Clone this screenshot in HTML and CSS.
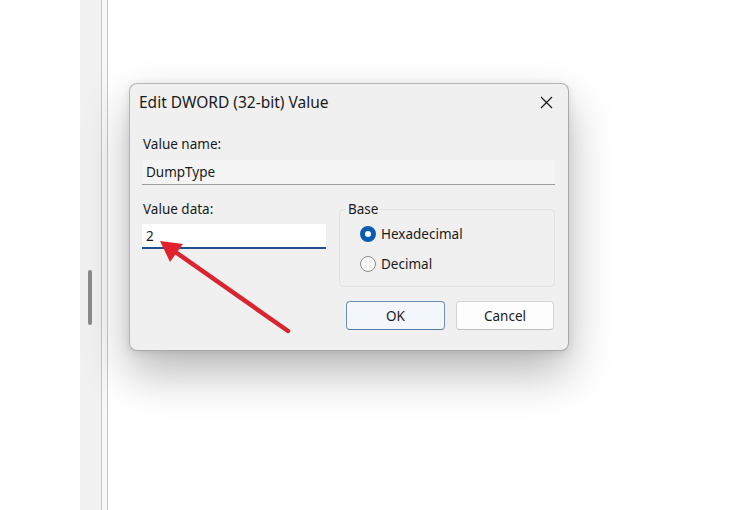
FILE: index.html
```html
<!DOCTYPE html>
<html lang="en">
<head>
<meta charset="utf-8">
<title>Edit DWORD (32-bit) Value</title>
<link rel="stylesheet" href="styles.css">
</head>
<body>
<div class="page">
  <div class="blank"></div>
  <div class="pane-edge">
    <div class="thumb"></div>
  </div>
  <div class="splitter"></div>
  <main class="main">
    <section class="dialog">
      <header class="titlebar">
        <span class="title">Edit DWORD (32-bit) Value</span>
        <span class="close" aria-label="Close">
          <svg width="13" height="13" viewBox="0 0 13 13"><path d="M1 1 L12 12 M12 1 L1 12" stroke="#1a1a1a" stroke-width="1.2" fill="none"/></svg>
        </span>
      </header>
      <div class="body">
        <div class="label first">Value name:</div>
        <div class="name-field">DumpType</div>
        <div class="row">
          <div class="data-col">
            <div class="label">Value data:</div>
            <div class="data-input">2</div>
          </div>
          <fieldset class="base">
            <legend>Base</legend>
            <div class="radio checked"><span class="dot"></span><span>Hexadecimal</span></div>
            <div class="radio"><span class="dot"></span><span>Decimal</span></div>
          </fieldset>
        </div>
        <div class="buttons">
          <button class="btn primary">OK</button>
          <button class="btn">Cancel</button>
        </div>
      </div>
    </section>
  </main>
</div>
<svg class="annotation" width="741" height="510" viewBox="0 0 741 510">
  <line x1="288" y1="331" x2="174" y2="251" stroke="#d9252f" stroke-width="4.5" stroke-linecap="round"/>
  <polygon points="160,241 170,262 183,244" fill="#e0222c"/>
</svg>
</body>
</html>
```
FILE: styles.css
```css
html, body {
  margin: 0;
  padding: 0;
  background: #ffffff;
}
body {
  width: 741px;
  height: 510px;
  overflow: hidden;
  position: relative;
  font-family: "Noto Sans", "Segoe UI", sans-serif;
  color: #1a1a1a;
}
.page {
  display: flex;
  height: 510px;
}
.blank {
  width: 80px;
  background: #ffffff;
}
.pane-edge {
  width: 21px;
  background: #f1f1f1;
  display: flex;
  justify-content: flex-start;
}
.thumb {
  width: 4px;
  height: 55px;
  margin-top: 270px;
  margin-left: 8px;
  background: #8a8a8a;
  border-radius: 2px;
}
.splitter {
  width: 5px;
  background: #f7f7f7;
  border-left: 1px solid #c6c6c6;
  border-right: 1px solid #c6c6c6;
}
.main {
  flex: 1;
  padding: 83px 0 0 21px;
}
.dialog {
  width: 438px;
  height: 266px;
  background: #f0f0f0;
  border: 1px solid #b4b4b4;
  border-right-color: #a8a8a8;
  border-bottom-color: #a8a8a8;
  border-radius: 8px;
  box-shadow: 0 22px 46px rgba(0, 0, 0, 0.28), 0 2px 10px rgba(0, 0, 0, 0.10);
  display: flex;
  flex-direction: column;
}
.titlebar {
  height: 36px;
  display: flex;
  align-items: center;
  justify-content: space-between;
  padding: 0 15px 0 9px;
}
.title {
  font-size: 15.5px;
  line-height: 20px;
}
.close {
  display: flex;
  margin-top: 1px;
}
.body {
  padding: 0 13px 0 12px;
  display: flex;
  flex-direction: column;
}
.label {
  font-size: 13.5px;
  line-height: 16px;
  padding-left: 1px;
}
.label.first {
  margin-top: 16px;
}
.name-field {
  margin-top: 8px;
  height: 24px;
  background: #f4f4f4;
  border-bottom: 1px solid #9c9c9c;
  font-size: 13.5px;
  line-height: 24px;
  padding-left: 4px;
}
.row {
  display: flex;
  justify-content: space-between;
  margin-top: 16px;
}
.data-col {
  width: 184px;
  display: flex;
  flex-direction: column;
}
.data-input {
  margin-top: 7px;
  height: 23px;
  background: #ffffff;
  border-bottom: 2px solid #234f92;
  font-size: 13.5px;
  line-height: 24px;
  padding-left: 4px;
}
.base {
  margin: 0;
  width: 216px;
  height: 86px;
  box-sizing: border-box;
  border: 1px solid #e2e2e2;
  border-radius: 4px;
  padding: 0 6px 0 6px;
}
.base legend {
  font-size: 13.5px;
  line-height: 16px;
  padding: 0 2px;
}
.radio {
  display: flex;
  align-items: center;
  gap: 5px;
  height: 20px;
  font-size: 13.5px;
  margin-left: 14px;
  margin-top: 10px;
}
.radio:first-of-type {
  margin-top: 7px;
}
.radio .dot {
  width: 16px;
  height: 16px;
  box-sizing: border-box;
  border-radius: 50%;
  border: 1px solid #8c8c8c;
  background: #f7f7f7;
}
.radio.checked .dot {
  border: 5px solid #0a5cb0;
  background: #ffffff;
}
.buttons {
  display: flex;
  justify-content: flex-end;
  gap: 11px;
  margin-top: 14px;
  padding-right: 1px;
}
.btn {
  width: 98px;
  height: 29px;
  box-sizing: border-box;
  font-family: inherit;
  font-size: 13.5px;
  color: #1a1a1a;
  background: #fdfdfd;
  border: 1px solid #d4d4d4;
  border-bottom-color: #c2c2c2;
  border-radius: 4px;
  padding: 0;
}
.btn.primary {
  width: 99px;
  background: #f3f7fb;
  border: 1px solid #6f8fb0;
  border-bottom-color: #557aa2;
}
.annotation {
  position: absolute;
  left: 0;
  top: 0;
  pointer-events: none;
}
```
